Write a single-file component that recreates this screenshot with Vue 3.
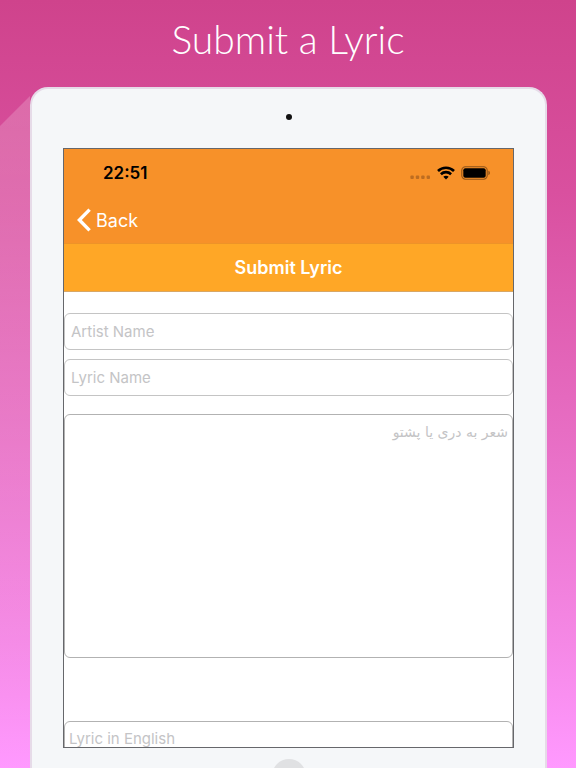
<template>
    <div class="poster">
        <h1 class="headline">Submit a Lyric</h1>
        <div class="stage">
            <svg class="shade" viewBox="0 0 30 680" preserveAspectRatio="none" aria-hidden="true">
                <defs>
                    <linearGradient id="shade-fill" x1="0" y1="0" x2="0" y2="1">
                        <stop offset="0" stop-color="#fff" stop-opacity="0.19" />
                        <stop offset="1" stop-color="#fff" stop-opacity="0" />
                    </linearGradient>
                </defs>
                <path d="M0 39 L30 9 V680 H0 Z" fill="url(#shade-fill)" />
            </svg>
            <div class="tablet">
                <div class="camera"></div>
                <main class="screen">
                    <div class="status-bar">
                        <span class="clock">22:51</span>
                        <div class="indicators">
                            <svg width="22" height="16" viewBox="0 0 22 16" fill="#bd6d21" aria-hidden="true">
                                <rect x="1.4" y="10.6" width="3.4" height="3.4" rx="1" />
                                <rect x="6.8" y="10.6" width="3.4" height="3.4" rx="1" />
                                <rect x="12.2" y="10.6" width="3.4" height="3.4" rx="1" />
                                <rect x="17.6" y="10.6" width="3.4" height="3.4" rx="1" />
                            </svg>
                            <svg width="18" height="14" viewBox="0 0 18 14" fill="none" stroke="#000" stroke-width="2.6" aria-hidden="true">
                                <path d="M1 5 C5.4 0.7 12.6 0.7 17 5" />
                                <path d="M3.9 8.2 C6.8 5.4 11.2 5.4 14.1 8.2" />
                                <path d="M9 13.4 L6.3 10.7 C7.8 9.3 10.2 9.3 11.7 10.7 Z" fill="#000" stroke="none" />
                            </svg>
                            <svg width="30" height="14" viewBox="0 0 30 14" aria-hidden="true">
                                <rect x="0.8" y="0.8" width="25.4" height="12.4" rx="3.6" fill="none" stroke="#8f5318" stroke-width="1.1" />
                                <rect x="2.3" y="2.3" width="22.4" height="9.4" rx="2" fill="#000" />
                                <path d="M27.4 4.8 C29.4 5.4 29.4 8.6 27.4 9.2 Z" fill="#8f5318" />
                            </svg>
                        </div>
                    </div>
                    <nav class="nav-bar">
                        <button type="button" class="back">
                            <svg width="14" height="24" viewBox="0 0 14 24" fill="none" stroke="#fff" stroke-width="3.4" aria-hidden="true">
                                <path d="M12.6 1.6 L2.4 12 L12.6 22.4" />
                            </svg>
                            <span>Back</span>
                        </button>
                    </nav>
                    <h2 class="title-bar">Submit Lyric</h2>
                    <form class="form" @submit.prevent>
                        <input v-model="artist" type="text" placeholder="Artist Name" aria-label="Artist Name" />
                        <input v-model="lyricName" type="text" placeholder="Lyric Name" aria-label="Lyric Name" />
                        <textarea
                            v-model="lyricNative"
                            class="native"
                            dir="rtl"
                            lang="fa"
                            placeholder="شعر به دری یا پشتو"
                            aria-label="شعر به دری یا پشتو"
                        ></textarea>
                        <textarea
                            v-model="lyricEnglish"
                            class="english"
                            placeholder="Lyric in English"
                            aria-label="Lyric in English"
                        ></textarea>
                    </form>
                </main>
                <div class="home-area">
                    <div class="home-button"></div>
                </div>
            </div>
        </div>
    </div>
</template>

<script setup>
import { ref } from 'vue'

const artist = ref('')
const lyricName = ref('')
const lyricNative = ref('')
const lyricEnglish = ref('')
</script>

<style>
body {
    margin: 0;
}
</style>

<style scoped>
.poster {
    height: 100vh;
    display: flex;
    flex-direction: column;
    overflow: hidden;
    background: linear-gradient(#cf438c 0%, #d9509f 25%, #e76dc3 56%, #f588e6 84%, #ff99ff 100%);
    font-family: Inter, "Liberation Sans", sans-serif;
}

.headline {
    margin: 0;
    padding: 15px 0 24px;
    color: #fff;
    font-family: Lato, sans-serif;
    font-size: 39px;
    font-weight: 300;
    line-height: 48px;
    text-align: center;
}

.stage {
    flex: 1;
    min-height: 0;
    display: grid;
    grid-template-columns: 30px minmax(0, 1fr) 29px;
}

.shade {
    width: 30px;
    height: 100%;
}

.tablet {
    display: flex;
    flex-direction: column;
    min-height: 0;
    box-sizing: border-box;
    padding: 0 31px;
    background: #f5f7f9;
    border: 2px solid #e6dbe8;
    border-bottom: none;
    border-radius: 18px 18px 0 0;
}

.camera {
    flex: none;
    width: 6px;
    height: 6px;
    margin: 25px auto 28px;
    border-radius: 50%;
    background: #111;
}

.screen {
    flex: 1;
    min-height: 0;
    overflow: hidden;
    background: #fff;
    border: 1px solid #66676b;
}

.status-bar {
    display: flex;
    align-items: center;
    justify-content: space-between;
    height: 48px;
    padding: 0 22px 0 39px;
    background: #f79129;
}

.clock {
    color: #000;
    font-size: 17px;
    font-weight: 600;
}

.indicators {
    display: flex;
    align-items: center;
    gap: 6px;
}

.nav-bar {
    display: flex;
    align-items: center;
    height: 46px;
    padding: 0 13px;
    background: #f79129;
    border-bottom: 1px solid #ee9328;
}

.back {
    display: flex;
    align-items: center;
    gap: 5px;
    padding: 0;
    border: none;
    background: none;
    color: #fff;
    font-family: inherit;
    font-size: 18px;
    cursor: pointer;
}

.title-bar {
    margin: 0;
    background: #ffa726;
    border-bottom: 1px solid #d8a765;
    color: #fff;
    font-size: 18px;
    font-weight: 600;
    line-height: 47px;
    text-align: center;
}

.form {
    display: flex;
    flex-direction: column;
    padding-top: 21px;
}

input,
textarea {
    box-sizing: border-box;
    width: 100%;
    margin: 0;
    border: 1px solid #c4c4c4;
    border-radius: 6px;
    background: #fff;
    color: #222;
    font-family: inherit;
    font-size: 15px;
    outline: none;
}

input {
    height: 37px;
    margin-bottom: 9px;
    padding: 0 6px;
}

textarea {
    display: block;
    border-color: #b2b2b2;
    padding: 7px 4px;
    line-height: 20px;
    resize: none;
}

input::placeholder,
textarea::placeholder {
    color: #c4c4c6;
    opacity: 1;
}

.native {
    height: 244px;
    margin-top: 9px;
    font-family: "DejaVu Sans", sans-serif;
    font-size: 14px;
}

.english {
    height: 244px;
    margin-top: 63px;
}

.home-area {
    flex: none;
    height: 20px;
    padding-top: 11px;
    box-sizing: border-box;
    overflow: hidden;
}

.home-button {
    width: 34px;
    height: 34px;
    margin: 0 auto;
    border-radius: 50%;
    background: #e0e1e3;
}
</style>
